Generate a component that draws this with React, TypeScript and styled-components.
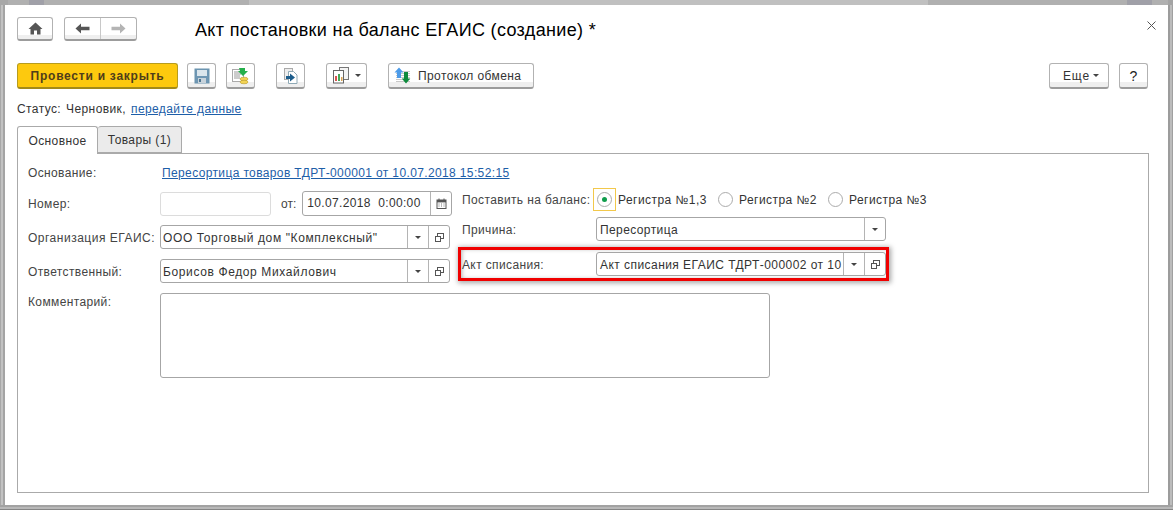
import React from 'react'
import styled, { createGlobalStyle } from 'styled-components'

const Global = createGlobalStyle`
  html, body { margin: 0; padding: 0; background: #b4b4b4; }
  * { box-sizing: border-box; }
`

const Frame = styled.div`
  width: 1173px;
  height: 510px;
  display: flex;
  flex-direction: column;
  background: #b4b4b4;
  font-family: "Liberation Sans", Arial, sans-serif;
  font-size: 12px;
  color: #333;
  overflow: hidden;
`
const TopEdge = styled.div`
  display: flex;
  height: 5px;
  flex: none;
`
const EdgePiece = styled.div<{ $w: number; $c: string }>`
  width: ${p => p.$w}px;
  background: ${p => p.$c};
`
const Middle = styled.div`
  display: flex;
  height: 500px;
  flex: none;
`
const LeftEdge = styled.div`
  width: 5px;
  background: linear-gradient(90deg, #a8a8a8 0 1px, #c2c2c2 1px 3px, #a4a4a4 3px 5px);
`
const RightEdge = styled.div`
  width: 5px;
  background: linear-gradient(90deg, #9c9c9c 0 2px, #bcbcbc 2px 4px, #a0a0a0 4px 5px);
`
const BottomEdge = styled.div`
  height: 5px;
  flex: none;
  background: linear-gradient(#a2a2a2 0 2px, #b8b8b8 2px 4px, #858585 4px 5px);
`
const Win = styled.div`
  height: 500px;
  width: 1163px;
  background: #fff;
  padding: 12px 20px 0 12px;
  display: flex;
  flex-direction: column;
`
const TopBar = styled.div`
  display: flex;
  align-items: center;
  height: 24px;
`
const Button = styled.button<{ $w: number; $ml?: number }>`
  width: ${p => p.$w}px;
  height: 26px;
  margin-left: ${p => p.$ml ?? 0}px;
  padding: 0;
  display: inline-flex;
  align-items: center;
  justify-content: center;
  gap: 6px;
  border: 1px solid #b2b2b2;
  border-bottom: 2px solid #9c9c9c;
  border-radius: 3px;
  background: linear-gradient(#fff 0, #fff 18px, #efefef 18px, #efefef 100%);
  font: inherit;
  letter-spacing: 0.45px;
  color: #333;
`
const NavButton = styled(Button)`
  height: 24px;
  background: linear-gradient(#fff 0, #fff 17px, #efefef 17px, #efefef 100%);
`
const ExchangeButton = styled(Button)`
  justify-content: flex-start;
  padding-left: 5px;
  gap: 6px;
  letter-spacing: 0.4px;
`
const MoreButton = styled(Button)`
  padding-left: 4px;
  gap: 3px;
  letter-spacing: 0.9px;
`
const HelpButton = styled(Button)`
  font-size: 14px;
  color: #222;
`
const NavGroup = styled.div`
  display: flex;
  width: 73px;
  height: 24px;
  margin-left: 11px;
  border: 1px solid #b2b2b2;
  border-bottom: 2px solid #9c9c9c;
  border-radius: 3px;
  background: linear-gradient(#fff 0, #fff 17px, #efefef 17px, #efefef 100%);
`
const NavCell = styled.div<{ $line?: boolean }>`
  flex: 1;
  display: flex;
  align-items: center;
  justify-content: center;
  border-right: ${p => (p.$line ? '1px solid #c8c8c8' : 'none')};
`
const Title = styled.div`
  margin-left: 58px;
  font-size: 18px;
  letter-spacing: 0.33px;
  color: #000;
  flex: 1;
  margin-top: 2px;
`
const Close = styled.div`
  margin-right: -8px;
  margin-top: -8px;
  display: flex;
`
const Toolbar = styled.div`
  display: flex;
  align-items: center;
  height: 26px;
  margin-top: 22px;
`
const Primary = styled.button`
  width: 161px;
  height: 26px;
  padding: 0;
  border: 1px solid #b79c1e;
  border-bottom: 2px solid #a38a18;
  border-radius: 3px;
  background: #fdc90e;
  font: inherit;
  font-weight: bold;
  letter-spacing: 0.75px;
  color: #4f3d1a;
`
const Spacer = styled.div`
  flex: 1;
`
const Caret = styled.span`
  display: inline-block;
  width: 0;
  height: 0;
  border-left: 3px solid transparent;
  border-right: 3px solid transparent;
  border-top: 3px solid #444;
`
const Status = styled.div`
  height: 16px;
  margin-top: 12px;
  display: flex;
  gap: 5px;
  align-items: center;
  letter-spacing: 0.4px;
`
const Link = styled.a`
  color: #1d5ea8;
  text-decoration: underline;
  letter-spacing: 0.4px;
`
const BaseLink = styled(Link)`
  margin-top: 1px;
  letter-spacing: 0.37px;
`
const Tabs = styled.div`
  display: flex;
  height: 28px;
  margin-top: 9px;
  position: relative;
  z-index: 1;
`
const Tab = styled.div<{ $active?: boolean; $w: number }>`
  width: ${p => p.$w}px;
  height: ${p => (p.$active ? 28 : 27)}px;
  border: 1px solid #aaa;
  border-bottom: ${p => (p.$active ? 'none' : '1px solid #aaa')};
  border-left: ${p => (p.$active ? '1px solid #aaa' : 'none')};
  border-radius: 3px 3px 0 0;
  background: ${p => (p.$active ? '#fff' : '#ebebeb')};
  display: flex;
  align-items: center;
  justify-content: center;
  letter-spacing: 0.4px;
`
const Panel = styled.div`
  width: 1132px;
  height: 340px;
  margin-top: -1px;
  border: 1px solid #aaa;
  padding: 10px 0 0 10px;
`
const BaseRow = styled.div`
  display: flex;
  align-items: center;
  height: 16px;
`
const Label = styled.div<{ $w?: number; $ls?: number }>`
  width: ${p => p.$w ?? 134}px;
  flex: none;
  padding-top: 1px;
  color: #444;
  letter-spacing: ${p => p.$ls ?? 0.37}px;
  white-space: nowrap;
`
const Columns = styled.div`
  display: flex;
  margin-top: 11px;
`
const LeftCol = styled.div`
  width: 430px;
  display: flex;
  flex-direction: column;
`
const RightCol = styled.div`
  display: flex;
  flex-direction: column;
  margin-top: -3px;
`
const FormRow = styled.div<{ $mt?: number }>`
  display: flex;
  align-items: center;
  margin-top: ${p => p.$mt ?? 0}px;
`
const RightRow = styled(FormRow)`
  padding-left: 4px;
`
const Highlight = styled.div`
  display: flex;
  align-items: center;
  width: 431px;
  height: 34px;
  margin-top: 6px;
  padding-left: 1px;
  border: 3px solid #f00000;
  box-shadow: 1px 1px 5px 1px rgba(0, 0, 0, 0.35), inset 2px 0 4px -1px rgba(0, 0, 0, 0.3);
`
const Box = styled.div<{ $w: number; $faint?: boolean; $h?: number; $ml?: number }>`
  width: ${p => p.$w}px;
  height: ${p => p.$h ?? 24}px;
  flex: none;
  margin-left: ${p => p.$ml ?? 0}px;
  display: flex;
  align-items: stretch;
  border: 1px solid ${p => (p.$faint ? '#dcdcdc' : '#a6a6a6')};
  border-radius: 3px;
  background: #fff;
`
const Value = styled.div<{ $pl?: number; $lh?: number; $ls?: number }>`
  flex: 1;
  min-width: 0;
  white-space: nowrap;
  padding-left: ${p => p.$pl ?? 3}px;
  line-height: ${p => p.$lh ?? 24}px;
  letter-spacing: ${p => p.$ls ?? 0.62}px;
`
const Cell = styled.div<{ $w: number }>`
  width: ${p => p.$w}px;
  flex: none;
  border-left: 1px solid #b4b4b4;
  display: flex;
  align-items: center;
  justify-content: center;
`
const From = styled.div`
  margin: 0 5px 0 10px;
  color: #444;
`
const Focus = styled.div`
  width: 23px;
  height: 23px;
  margin-left: 2px;
  border: 1px solid #f2c84b;
  display: flex;
  align-items: center;
  justify-content: center;
`
const Radio = styled.span<{ $on?: boolean }>`
  width: 15px;
  height: 15px;
  flex: none;
  border: 1px solid #ababab;
  border-radius: 50%;
  display: flex;
  align-items: center;
  justify-content: center;
  &::after {
    content: '';
    display: ${p => (p.$on ? 'block' : 'none')};
    width: 5px;
    height: 5px;
    border-radius: 50%;
    background: #0f9d4c;
  }
`
const RadioText = styled.span<{ $w: number; $ml?: number }>`
  width: ${p => p.$w}px;
  margin-left: ${p => p.$ml ?? 6}px;
  letter-spacing: 0.45px;
  white-space: nowrap;
`
const CommentRow = styled.div`
  display: flex;
  margin-top: 10px;
`
const CommentLabel = styled(Label)`
  padding-top: 2px;
`
const Comment = styled.div`
  width: 610px;
  height: 85px;
  margin-left: -2px;
  border: 1px solid #a6a6a6;
  border-radius: 3px;
`

const CopyIcon = () => (
  <svg width="11" height="11" viewBox="0 0 11 11" fill="none" stroke="#555">
    <rect x="3.5" y="1.5" width="6" height="5" fill="#fff" />
    <rect x="1.5" y="4.5" width="5" height="5" fill="#fff" />
  </svg>
)
const CalendarIcon = () => (
  <svg width="11" height="11" viewBox="0 0 11 11">
    <rect x="1" y="2" width="9" height="8.5" fill="#fff" stroke="#555" />
    <rect x="1" y="2" width="9" height="2.4" fill="#555" />
    <path d="M3 0.5v2M8 0.5v2" stroke="#555" />
    <path d="M2.5 6h1M5 6h1M7.500 6h1M2.500 8h1M5 8h1M7.500 8h1" stroke="#777" />
  </svg>
)
const HomeIcon = () => (
  <svg width="15" height="13" viewBox="0 0 15 13">
    <path d="M7.500 0.500L0.500 7h2v5.500h3.500V8.500h3v4H12.500V7h2z" fill="#555" />
  </svg>
)
const ArrowIcon = ({ dir, color }: { dir: 'l' | 'r'; color: string }) => (
  <svg width="15" height="11" viewBox="0 0 15 11" style={{ transform: dir === 'r' ? 'scaleX(-1)' : undefined }}>
    <path d="M0.500 5.500L6 0.500V3.800H14.500V7.200H6V10.500z" fill={color} />
  </svg>
)
const CloseIcon = () => (
  <svg width="9" height="9" viewBox="0 0 9 9">
    <path d="M0.500 0.500L8.500 8.500M8.500 0.500L0.500 8.500" stroke="#555" />
  </svg>
)
const SaveIcon = () => (
  <svg width="16" height="16" viewBox="0 0 16 16">
    <rect x="1" y="1" width="14" height="14" fill="#6f97b4" stroke="#6a93ae" />
    <rect x="3" y="2" width="10" height="6" fill="#dbe6ed" />
    <rect x="4" y="10" width="8" height="5" fill="#c8d3db" />
    <rect x="5" y="11" width="2" height="3" fill="#4d7591" />
  </svg>
)
const PostIcon = () => (
  <svg width="20" height="18" viewBox="0 0 20 18">
    <rect x="1.500" y="2.500" width="11" height="12" fill="#fff" stroke="#aaa" />
    <path d="M3 5h7M3 7h7M3 9h6M3 11h6" stroke="#999" />
    <path d="M8 1h6v3h3l-5 5-5-5h2z" fill="#25b04b" />
    <ellipse cx="13" cy="12" rx="4" ry="1.800" fill="#f3d455" stroke="#b89a2a" strokeWidth="0.600" />
    <ellipse cx="13" cy="15" rx="4" ry="1.800" fill="#f3d455" stroke="#b89a2a" strokeWidth="0.600" />
  </svg>
)
const MoveIcon = () => (
  <svg width="18" height="18" viewBox="0 0 18 18">
    <rect x="2.500" y="1.500" width="8" height="11" fill="#eee" stroke="#aaa" />
    <path d="M6.500 4.500h5l3.500 3.500v8.500h-8.500z" fill="#fff" stroke="#8fa9b5" />
    <path d="M4 9h4V6.500l5 4-5 4V12H4z" fill="#1c5d8c" />
  </svg>
)
const ReportIcon = () => (
  <svg width="17" height="17" viewBox="0 0 17 17">
    <rect x="7.500" y="0.500" width="9" height="12" fill="#f4f4f4" stroke="#777" />
    <rect x="1.500" y="3.500" width="10" height="12.500" fill="#fff" stroke="#666" />
    <rect x="3" y="9" width="2" height="5" fill="#d8534f" />
    <rect x="6" y="7" width="2" height="7" fill="#46a758" />
    <rect x="9" y="10" width="1.500" height="4" fill="#d8a24f" />
  </svg>
)
const ExchangeIcon = () => (
  <svg width="18" height="17" viewBox="0 0 18 17">
    <path d="M2 14.500h14M2 12.500h14M2 10.500h14M2 8.500h14M2 6.500h14M2 4.500h14" stroke="#c8c8c8" />
    <path d="M5 0.500L9.500 5.500H7V11H3V5.500H0.500z" fill="#4d9be8" />
    <path d="M12 16.500L7.800 11.500H10V5h4v6.500h2.300z" fill="#0d8a3c" />
  </svg>
)

const Select = ({ value, pl, ls, open = true }: { value: string; pl?: number; ls?: number; open?: boolean }) => (
  <Box $w={290}>
    <Value $pl={pl} $ls={ls}>{value}</Value>
    <Cell $w={21}><Caret /></Cell>
    {open && <Cell $w={21}><CopyIcon /></Cell>}
  </Box>
)

const topPieces: [number, string][] = [
  [8, '#a8a8a8'], [21, '#b0b0b0'], [15, '#a0a0a8'], [205, '#b0b0b0'],
  [679, '#c0c0c0'], [199, '#b0b0b0'], [25, '#a0a0a8'], [16, '#b0b0b0'], [5, '#a4a4a4'],
]

const App = () => {
  return (
    <Frame>
      <Global />
      <TopEdge>
        {topPieces.map(([w, c], i) => <EdgePiece key={i} $w={w} $c={c} />)}
      </TopEdge>
      <Middle>
        <LeftEdge />
        <Win>
          <TopBar>
            <NavButton $w={36}><HomeIcon /></NavButton>
            <NavGroup>
              <NavCell $line><ArrowIcon dir="l" color="#555" /></NavCell>
              <NavCell><ArrowIcon dir="r" color="#b4b4b4" /></NavCell>
            </NavGroup>
            <Title>Акт постановки на баланс ЕГАИС (создание) *</Title>
            <Close><CloseIcon /></Close>
          </TopBar>
          <Toolbar>
            <Primary>Провести и закрыть</Primary>
            <Button $w={29} $ml={9}><SaveIcon /></Button>
            <Button $w={29} $ml={10}><PostIcon /></Button>
            <Button $w={29} $ml={21}><MoveIcon /></Button>
            <Button $w={41} $ml={21}><ReportIcon /><Caret /></Button>
            <ExchangeButton $w={146} $ml={21}><ExchangeIcon />Протокол обмена</ExchangeButton>
            <Spacer />
            <MoreButton $w={60}>Еще<Caret /></MoreButton>
            <HelpButton $w={29} $ml={10}>?</HelpButton>
          </Toolbar>
          <Status>
            <span>Статус:</span>
            <span>Черновик,</span>
            <Link>передайте данные</Link>
          </Status>
          <Tabs>
            <Tab $active $w={81}>Основное</Tab>
            <Tab $w={84}>Товары (1)</Tab>
          </Tabs>
          <Panel>
            <BaseRow>
              <Label>Основание:</Label>
              <BaseLink>Пересортица товаров ТДРТ-000001 от 10.07.2018 15:52:15</BaseLink>
            </BaseRow>
            <Columns>
              <LeftCol>
                <FormRow>
                  <Label $w={132}>Номер:</Label>
                  <Box $w={111} $faint />
                  <From>от:</From>
                  <Box $w={150} $h={25} $ml={1}>
                    <Value $pl={4} $lh={22} $ls={0.35}>10.07.2018&nbsp; 0:00:00</Value>
                    <Cell $w={21}><CalendarIcon /></Cell>
                  </Box>
                </FormRow>
                <FormRow $mt={9}>
                  <Label $w={132} $ls={0.5}>Организация ЕГАИС:</Label>
                  <Select pl={2} value={'ООО Торговый дом "Комплексный"'} />
                </FormRow>
                <FormRow $mt={10}>
                  <Label $w={132}>Ответственный:</Label>
                  <Select pl={2} value="Борисов Федор Михайлович" />
                </FormRow>
              </LeftCol>
              <RightCol>
                <RightRow>
                  <Label $w={129}>Поставить на баланс:</Label>
                  <Focus><Radio $on /></Focus>
                  <RadioText $w={100} $ml={2}>Регистра №1,3</RadioText>
                  <Radio />
                  <RadioText $w={89}>Регистра №2</RadioText>
                  <Radio />
                  <RadioText $w={90}>Регистра №3</RadioText>
                </RightRow>
                <RightRow $mt={6}>
                  <Label>Причина:</Label>
                  <Select ls={0.4} value="Пересортица" open={false} />
                </RightRow>
                <Highlight>
                  <Label>Акт списания:</Label>
                  <Select ls={0.45} value="Акт списания ЕГАИС ТДРТ-000002 от 10" />
                </Highlight>
              </RightCol>
            </Columns>
            <CommentRow>
              <CommentLabel>Комментарий:</CommentLabel>
              <Comment />
            </CommentRow>
          </Panel>
        </Win>
        <RightEdge />
      </Middle>
      <BottomEdge />
    </Frame>
  )
}

export default App
